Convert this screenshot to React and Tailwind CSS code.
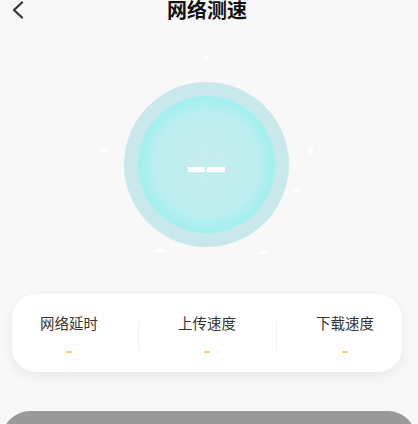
import React from 'react';

const STATS = ['网络延时', '上传速度', '下载速度'];

// faint white tick marks around the dial
const MARKS = [
  { x: 206, y: 58, w: 5, h: 4 },
  { x: 103, y: 150, w: 9, h: 3 },
  { x: 310, y: 150, w: 5, h: 7 },
  { x: 296, y: 190, w: 7, h: 3 },
  { x: 160, y: 250, w: 12, h: 3 },
  { x: 262, y: 252, w: 9, h: 3 },
];

function BackIcon() {
  return (
    <svg width="14" height="18" viewBox="0 0 14 18" fill="none">
      <path d="M11 1.5 3 9l8 7.5" stroke="#333" strokeWidth="2.2" strokeLinecap="round" strokeLinejoin="round" />
    </svg>
  );
}

export default function App() {
  return (
    <div
      className="w-[418px] h-[424px] overflow-hidden bg-[#f8f8f8] flex flex-col"
      style={{ fontFamily: '"Noto Sans CJK SC", "Noto Sans", sans-serif' }}
    >
      {/* Header */}
      <div className="relative h-[20px] shrink-0 flex items-center justify-center">
        <div className="absolute left-[11px] top-[1px]">
          <BackIcon />
        </div>
        <h1 className="text-[20px] leading-[20px] font-bold text-[#111] -ml-[4px]">网络测速</h1>
      </div>

      {/* Dial */}
      <div className="relative h-[274px] shrink-0">
        {MARKS.map((m, i) => (
          <span
            key={i}
            className="absolute bg-white rounded-full"
            style={{ left: m.x - m.w / 2, top: m.y - 20 - m.h / 2, width: m.w, height: m.h }}
          />
        ))}
        <div className="absolute left-[124px] top-[62px] w-[165px] h-[165px] rounded-full bg-[#c9e8eb] flex items-center justify-center">
          <div className="w-[137px] h-[137px] rounded-full bg-[radial-gradient(circle,#c6ecee_0%,#bdeeef_52%,#9cf0ef_74%,#72f0ee_90%,#60efee_100%)] flex items-center justify-center">
            <div className="flex gap-[2px] mt-[9px]">
              <span className="w-[17px] h-[5px] bg-white" />
              <span className="w-[18px] h-[5px] bg-white" />
            </div>
          </div>
        </div>
      </div>

      {/* Stats card */}
      <div className="ml-[12px] mr-[16px] h-[78px] shrink-0 rounded-[24px] bg-white shadow-[0_4px_12px_rgba(0,0,0,0.07)] flex items-center justify-between px-[28px]">
        {STATS.map((label, i) => (
          <React.Fragment key={label}>
            {i > 0 && <div className="w-px h-[28px] bg-[#f0f0f0] mt-[6px]" />}
            <div className="flex flex-col items-center">
              <span className="text-[14.5px] leading-[20px] text-[#333]">{label}</span>
              <span className="mt-[18px] w-[6px] h-[2px] bg-[#f7d36e]" />
            </div>
          </React.Fragment>
        ))}
      </div>

      {/* Start button */}
      <div className="mt-[39px] mx-[2px] h-[56px] shrink-0 rounded-[28px] bg-[#999]" />
    </div>
  );
}
